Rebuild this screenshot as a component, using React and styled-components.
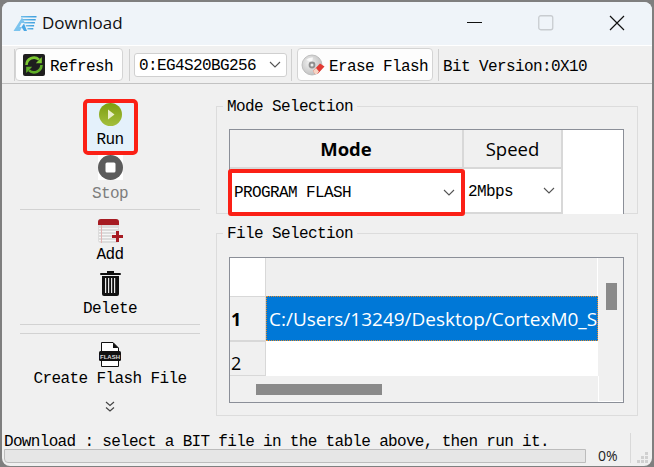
import React from 'react'
import styled, { createGlobalStyle } from 'styled-components'

const Global = createGlobalStyle`
  html, body { margin: 0; padding: 0; background: #7f7f7f; }
  #root { width: 654px; height: 467px; overflow: hidden; }
`
const mono = `"Liberation Mono", monospace`
const sans = `"Open Sans", "Noto Sans", sans-serif`

const Page = styled.div`
  width: 654px;
  height: 467px;
  padding: 2px 2px 1px 2px;
  box-sizing: border-box;
`
const Window = styled.div`
  width: 650px;
  height: 464px;
  background: #f0f0f0;
  border-radius: 8px;
  overflow: hidden;
  display: flex;
  flex-direction: column;
  font-family: ${mono};
  font-size: 16px;
  letter-spacing: -0.6px;
  color: #000;
`
const TitleBar = styled.div`
  height: 43px;
  flex: none;
  box-sizing: content-box;
  background: #eff4f9;
  border-bottom: 1px solid #fff;
  display: flex;
  align-items: center;
  padding: 0 0 0 11px;
  & > * { position: relative; top: -1px; }
`
const Title = styled.div`
  font-family: ${sans};
  font-size: 17px;
  letter-spacing: 0;
  margin-left: 5px;
  flex: 1;
  color: #111;
`
const WinButton = styled.div`
  width: 22px;
  height: 22px;
  display: flex;
  align-items: center;
  justify-content: center;
  margin-right: ${p => p.$gap}px;
`
const Toolbar = styled.div`
  height: 38px;
  flex: none;
  box-sizing: border-box;
  border-bottom: 1px solid #c2c2c2;
  display: flex;
  align-items: center;
  padding: 0 0 0 12px;
`
const ToolSep = styled.div`
  width: 1px;
  height: 32px;
  background: #d0d0d0;
  margin: 0 ${p => p.$right}px 0 ${p => p.$left}px;
`
const ToolButton = styled.div`
  width: ${p => p.$w}px;
  height: 33px;
  box-sizing: border-box;
  background: #fdfdfd;
  border: 1px solid #d4d4d4;
  border-radius: 4px;
  display: flex;
  align-items: center;
  padding-left: ${p => p.$pad}px;
  gap: ${p => p.$gap}px;
  white-space: nowrap;
`
const ToolText = styled.span`
  margin-top: ${p => p.$drop}px;
`
const Combo = styled.div`
  width: ${p => p.$w}px;
  height: ${p => p.$h}px;
  box-sizing: border-box;
  background: #fff;
  border: ${p => (p.$flat ? 'none' : '1px solid #d0d0d0')};
  border-radius: ${p => (p.$flat ? 0 : 3)}px;
  display: flex;
  align-items: center;
  justify-content: space-between;
  padding: 0 ${p => p.$right}px 0 ${p => p.$left}px;
  white-space: nowrap;
`
const Main = styled.div`
  flex: 1;
  min-height: 0;
  display: flex;
`
const Sidebar = styled.div`
  width: 214px;
  flex: none;
  box-sizing: border-box;
  padding: 15px 16px 0 18px;
  display: flex;
  flex-direction: column;
  align-items: center;
`
const Action = styled.div`
  width: 55px;
  height: ${p => p.$h}px;
  flex: none;
  margin-top: ${p => p.$top || 0}px;
  display: flex;
  flex-direction: column;
  align-items: center;
  white-space: nowrap;
  line-height: 17px;
  color: ${p => (p.$disabled ? '#7d7d7d' : '#000')};
  & > span { margin-top: ${p => p.$gap}px; }
  & > svg { flex: none; }
`
const RunAction = styled(Action)`
  box-sizing: border-box;
  background: #e4f1fb;
  border: 4px solid #fb2016;
  border-radius: 5px;
`
const Rule = styled.div`
  align-self: stretch;
  height: 1px;
  flex: none;
  background: #d2d2d2;
  margin-top: ${p => p.$top}px;
`
const Expand = styled.svg`
  margin-top: 10px;
  flex: none;
`
const Content = styled.div`
  flex: 1;
  box-sizing: border-box;
  padding: 22px 14px 0 0;
  display: flex;
  flex-direction: column;
`
const Group = styled.div`
  position: relative;
  box-sizing: border-box;
  width: 422px;
  height: ${p => p.$h}px;
  margin-bottom: ${p => p.$bottom}px;
  border: 1px solid #dcdcdc;
  padding: ${p => p.$top}px 0 0 12px;
`
const GroupTitle = styled.div`
  position: absolute;
  left: 6px;
  top: -9px;
  padding: 1px 4px 0;
  line-height: 17px;
  background: #f0f0f0;
`
const ModeTable = styled.div`
  width: 395px;
  height: 85px;
  box-sizing: border-box;
  background: #fff;
  border: 1px solid #8b8f98;
  border-bottom: none;
  display: grid;
  grid-template-columns: 234px 99px;
  grid-template-rows: 39px 45px;
  align-content: start;
  justify-content: start;
`
const HeadCell = styled.div`
  box-sizing: border-box;
  background: #f0f0f0;
  border-right: 2px solid #d8d8d8;
  border-bottom: 2px solid #d8d8d8;
  display: flex;
  align-items: center;
  justify-content: center;
  font-family: ${sans};
  font-size: 18.5px;
  letter-spacing: 0;
  font-weight: ${p => (p.$bold ? 700 : 400)};
`
const ModeCell = styled.div`
  position: relative;
  z-index: 1;
  margin: 0 -1px -2px -2px;
  box-sizing: border-box;
  border: 4px solid #fb2016;
  border-radius: 3px;
`
const SpeedCell = styled.div`
  box-sizing: border-box;
  border-right: 2px solid #d8d8d8;
  border-bottom: 2px solid #d8d8d8;
`
const FileTable = styled.div`
  width: 395px;
  height: 146px;
  box-sizing: border-box;
  background: #f0f0f0;
  border: 1px solid #8b8f98;
  display: grid;
  grid-template-columns: 36px 332px 25px;
  grid-template-rows: 38px 45px 35px 26px;
`
const Corner = styled.div`
  background: #fff;
  border-right: 1px solid #d8d8d8;
`
const ColHead = styled.div`
  background: #efefef;
  border-right: 1px solid #fff;
`
const VScroll = styled.div`
  grid-column: 3;
  grid-row: 1 / 4;
  background: #f0f0f0;
  padding: 25px 0 0 8px;
`
const Thumb = styled.div`
  width: ${p => p.$w}px;
  height: ${p => p.$h}px;
  background: #8a8a8a;
`
const RowHead = styled.div`
  box-sizing: border-box;
  background: #f0f0f0;
  border: 1px solid #d8d8d8;
  border-width: 1px 1px 1px 0;
  display: flex;
  align-items: center;
  padding: ${p => (p.$low ? '8px' : '0')} 0 0 1px;
  font-family: ${sans};
  font-size: 18px;
  letter-spacing: 0;
  font-weight: ${p => (p.$bold ? 700 : 400)};
  overflow: hidden;
`
const SelectedCell = styled.div`
  box-sizing: border-box;
  background: #0078d7;
  border: 1px dotted #e08a2c;
  color: #fff;
  font-family: ${sans};
  font-size: 19px;
  letter-spacing: 0;
  display: flex;
  align-items: center;
  padding-left: 2px;
  white-space: nowrap;
  overflow: hidden;
`
const EmptyCell = styled.div`
  background: #fff;
`
const HScroll = styled.div`
  grid-column: 1 / 3;
  background: #f0f0f0;
  padding: 8px 0 0 26px;
`
const ScrollFill = styled.div`
  background: #f0f0f0;
  border-left: 1px solid #fff;
  border-bottom: 1px solid #fff;
`
const Footer = styled.div`
  flex: none;
  height: 33px;
  display: grid;
  grid-template-columns: 584px 44px 1fr;
  grid-template-rows: 16px 14px;
  position: relative;
`
const Status = styled.div`
  grid-column: 1 / 3;
  position: relative;
  z-index: 1;
  padding: 1px 0 0 2px;
  line-height: 17px;
  letter-spacing: -0.67px;
  white-space: nowrap;
`
const Progress = styled.div`
  grid-row: 2;
  grid-column: 1;
  box-sizing: border-box;
  background: #e6e6e6;
  border: 1px solid #bcbcbc;
  margin-left: 2px;
  border-radius: 0 0 0 4px;
`
const Percent = styled.div`
  grid-row: 2;
  grid-column: 2;
  font-family: ${sans};
  font-size: 14px;
  letter-spacing: 0;
  line-height: 14px;
  padding-left: 12px;
  color: #222;
`
const FooterSep = styled.div`
  position: absolute;
  left: 628px;
  top: 0;
  bottom: 3px;
  width: 1px;
  background: #d9d9d9;
`
const Grip = styled.svg`
  position: absolute;
  right: 3px;
  bottom: 2px;
`

const Logo = () => (
  <svg width="24" height="18" viewBox="0 0 24 18">
    <defs>
      <linearGradient id="lg" x1="0" y1="1" x2="1" y2="0">
        <stop offset="0" stopColor="#8fd0f2" />
        <stop offset="1" stopColor="#2f95d9" />
      </linearGradient>
    </defs>
    <path d="M0.5 17 L9 3.5 L12 9 L8.5 9 L6.5 13 L9 13 L7 17 Z" fill="#7cc4ee" />
    <path d="M11 17 L8.5 13 L11 9.5 L14 17 Z" fill="#4aa7e4" />
    {[2, 5, 8, 11, 14].map((y, i) => (
      <rect key={y} x={8 + i * 1.6} y={y} width={15.5 - i * 2.4} height="1.6" fill="url(#lg)" />
    ))}
  </svg>
)

const RefreshIcon = () => (
  <svg width="22" height="22" viewBox="0 0 22 22">
    <rect width="22" height="22" rx="2" fill="#1e1e1e" />
    <path d="M3.5 11 A7.5 7.5 0 0 1 16 5.6" fill="none" stroke="#7cc832" strokeWidth="2.6" />
    <path d="M18.8 3 L18.8 9.2 L12.8 9.2 Z" fill="#7cc832" />
    <path d="M18.5 11 A7.5 7.5 0 0 1 6 16.4" fill="none" stroke="#5fae28" strokeWidth="2.6" />
    <path d="M3.2 19 L3.2 12.8 L9.2 12.8 Z" fill="#5fae28" />
  </svg>
)

const EraseIcon = () => (
  <svg width="25" height="22" viewBox="0 0 25 22">
    <defs>
      <radialGradient id="cd" cx="0.4" cy="0.4" r="0.7">
        <stop offset="0" stopColor="#f2f2f2" />
        <stop offset="1" stopColor="#b9b9b9" />
      </radialGradient>
    </defs>
    <circle cx="11" cy="11" r="10" fill="url(#cd)" stroke="#b5b5b5" strokeWidth="0.8" />
    <path d="M5 6 A8 8 0 0 1 12 3.5 L11 8 Z" fill="#fff" opacity="0.8" />
    <circle cx="11" cy="11" r="3.4" fill="#8f8f8f" />
    <circle cx="11" cy="11" r="1.5" fill="#ececec" />
    <path d="M12 17 L19 9.5 L23.5 12.5 L17 19.5 L14 20 Z" fill="#e23a33" />
    <path d="M12 17 L15 14 L18 17.5 L16 20 L14 20 Z" fill="#f6d5c5" />
  </svg>
)

const Chevron = () => (
  <svg width="12" height="7" viewBox="0 0 12 7">
    <path d="M1 1 L6 6 L11 1" fill="none" stroke="#555" strokeWidth="1.1" />
  </svg>
)

const RunIcon = () => (
  <svg width="23" height="23" viewBox="0 0 23 23">
    <defs>
      <linearGradient id="rn" x1="0" y1="0" x2="0" y2="1">
        <stop offset="0" stopColor="#7d9e0f" />
        <stop offset="1" stopColor="#a3bf3d" />
      </linearGradient>
    </defs>
    <circle cx="11.5" cy="11.5" r="11.5" fill="url(#rn)" />
    <path d="M9 6.5 L15.5 11.5 L9 16.5 Z" fill="#e9efc9" />
  </svg>
)

const StopIcon = () => (
  <svg width="25" height="25" viewBox="0 0 25 25">
    <rect width="25" height="25" fill="#fff" />
    <circle cx="12.5" cy="12.5" r="12.5" fill="#5c5c5c" />
    <rect x="7.5" y="7.5" width="10" height="10" rx="1.5" fill="#fff" />
  </svg>
)

const AddIcon = () => (
  <svg width="25" height="25" viewBox="0 0 25 25">
    <rect x="0" y="1" width="21" height="24" rx="3" fill="#dcdcdc" />
    <path d="M0 7 V4 a3 3 0 0 1 3 -3 H18 a3 3 0 0 1 3 3 V7 Z" fill="#a61b22" />
    {[10, 13, 16, 19, 22].map(y => (
      <rect key={y} x="1" y={y} width="19" height="1" fill="#f7f7f7" />
    ))}
    <rect x="3" y="7" width="1" height="18" fill="#e3b4b4" />
    <rect x="14" y="17" width="11" height="3" fill="#a61b22" />
    <rect x="18" y="13" width="3" height="11" fill="#a61b22" />
  </svg>
)

const DeleteIcon = () => (
  <svg width="21" height="25" viewBox="0 0 21 25">
    <rect x="7" y="0" width="7" height="2" fill="#111" />
    <rect x="0" y="2" width="21" height="2" rx="1" fill="#111" />
    <path d="M2 5 H19 V23 a2 2 0 0 1 -2 2 H4 a2 2 0 0 1 -2 -2 Z" fill="#111" />
    {[5, 8, 11, 14].map(x => (
      <rect key={x} x={x} y="7" width="1.2" height="15" fill="#e8e8e8" />
    ))}
  </svg>
)

const FlashIcon = () => (
  <svg width="22" height="25" viewBox="0 0 22 25">
    <path d="M2.5 0.5 H14 L19.5 6 V24.5 H2.5 Z" fill="#fff" stroke="#111" />
    <path d="M14 0.5 L19.5 6 H14 Z" fill="#111" />
    <rect x="0" y="9" width="22" height="10" rx="1.5" fill="#111" />
    <text x="11" y="16.5" textAnchor="middle" fontFamily="Liberation Sans, sans-serif" fontWeight="700" fontSize="6" letterSpacing="0" fill="#ddd">FLASH</text>
  </svg>
)

export default function App() {
  return (
    <Page>
      <Global />
      <Window>
        <TitleBar>
          <Logo />
          <Title>Download</Title>
          <WinButton $gap={49}>
            <svg width="16" height="2" viewBox="0 0 16 2"><rect width="15" height="1" fill="#111" /></svg>
          </WinButton>
          <WinButton $gap={49}>
            <svg width="16" height="16" viewBox="0 0 16 16"><rect x="0.75" y="0.75" width="14" height="14" rx="2" fill="none" stroke="#c8ccd0" strokeWidth="1.3" /></svg>
          </WinButton>
          <WinButton $gap={24}>
            <svg width="16" height="16" viewBox="0 0 16 16"><path d="M1 1 L15 15 M15 1 L1 15" stroke="#111" strokeWidth="1.2" /></svg>
          </WinButton>
        </TitleBar>
        <Toolbar>
          <ToolSep $left={0} $right={0} />
          <ToolButton $w={108} $pad={7} $gap={5}>
            <RefreshIcon />
            <ToolText $drop={4}>Refresh</ToolText>
          </ToolButton>
          <ToolSep $left={6} $right={4} />
          <Combo $w={153} $h={24} $left={4} $right={5}>
            <ToolText $drop={2}>0:EG4S20BG256</ToolText>
            <Chevron />
          </Combo>
          <ToolSep $left={4} $right={5} />
          <ToolButton $w={136} $pad={3} $gap={3}>
            <EraseIcon />
            <ToolText $drop={4}>Erase Flash</ToolText>
          </ToolButton>
          <ToolSep $left={5} $right={4} />
          <ToolText $drop={4}>Bit Version:0X10</ToolText>
        </Toolbar>
        <Main>
          <Sidebar>
            <RunAction $h={56} $gap={6}>
              <RunIcon />
              <span>Run</span>
            </RunAction>
            <Action $h={53} $gap={6} $disabled>
              <StopIcon />
              <span>Stop</span>
            </Action>
            <Rule $top={1} />
            <Action $h={49} $gap={4} $top={8}>
              <AddIcon />
              <span>Add</span>
            </Action>
            <Action $h={49} $gap={5} $top={4}>
              <DeleteIcon />
              <span>Delete</span>
            </Action>
            <Rule $top={4} />
            <Rule $top={8} />
            <Action $h={49} $gap={4} $top={8}>
              <FlashIcon />
              <span>Create Flash File</span>
            </Action>
            <Expand width="12" height="12" viewBox="0 0 12 12">
              <path d="M2 1 L6 4.5 L10 1 M2 6.5 L6 10 L10 6.5" fill="none" stroke="#444" strokeWidth="1.2" />
            </Expand>
          </Sidebar>
          <Content>
            <Group $h={108} $top={22} $bottom={19}>
              <GroupTitle>Mode Selection</GroupTitle>
              <ModeTable>
                <HeadCell $bold>Mode</HeadCell>
                <HeadCell>Speed</HeadCell>
                <ModeCell>
                  <Combo $w={229} $h={39} $flat $left={2} $right={6}>
                    <span>PROGRAM FLASH</span>
                    <Chevron />
                  </Combo>
                </ModeCell>
                <SpeedCell>
                  <Combo $w={97} $h={43} $flat $left={4} $right={6}>
                    <ToolText $drop={3}>2Mbps</ToolText>
                    <Chevron />
                  </Combo>
                </SpeedCell>
              </ModeTable>
            </Group>
            <Group $h={183} $top={23} $bottom={0}>
              <GroupTitle>File Selection</GroupTitle>
              <FileTable>
                <Corner />
                <ColHead />
                <VScroll><Thumb $w={11} $h={27} /></VScroll>
                <RowHead $bold>1</RowHead>
                <SelectedCell>C:/Users/13249/Desktop/CortexM0_Soc</SelectedCell>
                <RowHead $low>2</RowHead>
                <EmptyCell />
                <HScroll><Thumb $w={126} $h={11} /></HScroll>
                <ScrollFill />
              </FileTable>
            </Group>
          </Content>
        </Main>
        <Footer>
          <Status>Download : select a BIT file in the table above, then run it.</Status>
          <Progress />
          <Percent>0%</Percent>
          <FooterSep />
          <Grip width="12" height="12" viewBox="0 0 12 12">
            {[[8, 0], [4, 4], [8, 4], [0, 8], [4, 8], [8, 8]].map(([x, y]) => (
              <rect key={`${x}-${y}`} x={x} y={y} width="3" height="3" fill="#d0d0d0" />
            ))}
          </Grip>
        </Footer>
      </Window>
    </Page>
  )
}
